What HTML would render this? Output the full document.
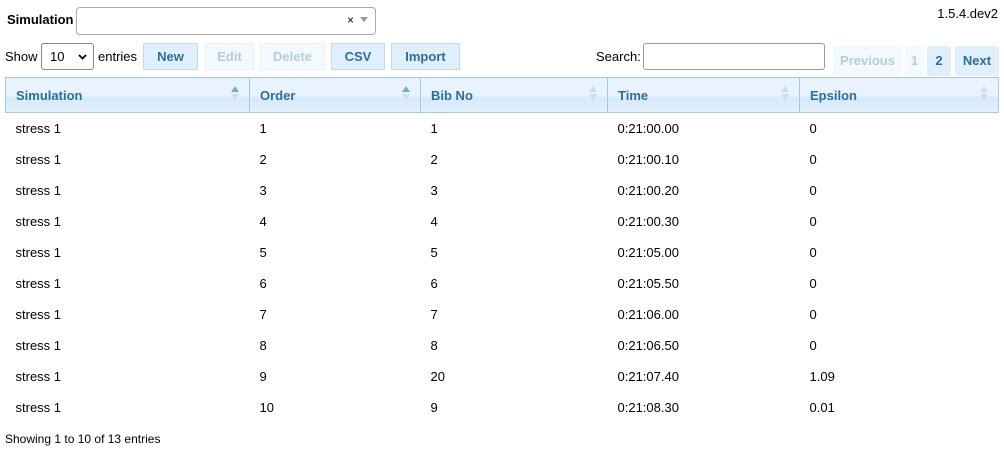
<!DOCTYPE html>
<html><head><style>
*{box-sizing:border-box}
body{margin:0;width:1004px;height:466px;font-family:"Liberation Sans",Arial,sans-serif;font-size:13px;color:#000;background:#fff;position:relative;overflow:hidden}
.a{position:absolute}
.btn{position:absolute;top:43px;height:27px;background:#dfeffc;border:1px solid #c5dbec;color:#2e6e9e;font-weight:bold;font-size:13px;text-align:center;line-height:25px}
.dis{opacity:.35}
.pg{position:absolute;top:46px;height:30px;background:#dfeffc;border-radius:3px;color:#2e6e9e;font-weight:bold;text-align:center;line-height:30px}
table{position:absolute;left:5px;top:77px;width:994px;border-collapse:collapse}
th{height:35px;border:1px solid #a6c9e2;background:linear-gradient(#e8f3fd,#e8f3fd 50%,#d6e9f9 58%,#e4f1fc);color:#2e6e9e;text-align:left;padding:0 10px;font-size:13px;position:relative}
th .s{position:absolute;right:10px;top:8px;width:8px}
th .s i{display:block;width:0;height:0;border-left:4px solid transparent;border-right:4px solid transparent}
th .s .u{border-bottom:6px solid #7aa7cf;margin-bottom:2px}
th .s .d{border-top:6px solid #c9def0}
th .s.n .u{border-bottom-color:#c9def0}
td{height:31px;padding:0 10px;font-size:13px}
</style></head><body>
<div class="a" style="left:7px;top:12px;font-weight:bold">Simulation</div>
<div class="a" style="left:76px;top:7px;width:300px;height:28px;border:1px solid #aaa;border-radius:4px"></div>
<div class="a" style="left:347px;top:13px;font-size:12px">×</div>
<div class="a" style="left:360px;top:17px;width:0;height:0;border-left:4px solid transparent;border-right:4px solid transparent;border-top:5px solid #999"></div>
<div class="a" style="right:6px;top:6px">1.5.4.dev2</div>
<div class="a" style="left:5px;top:49px">Show</div>
<div class="a" style="left:41px;top:43px;width:53px;height:27px;border:1px solid #888;border-radius:3px;padding:5px 0 0 8px">10<svg style="position:absolute;right:6px;top:10px" width="9" height="6" viewBox="0 0 9 6"><path d="M1 1L4.5 4.5L8 1" fill="none" stroke="#000" stroke-width="1.8"/></svg></div>
<div class="a" style="left:98px;top:49px">entries</div>
<div class="btn" style="left:143px;width:55px">New</div>
<div class="btn dis" style="left:205px;width:49px">Edit</div>
<div class="btn dis" style="left:260px;width:65px">Delete</div>
<div class="btn" style="left:331px;width:54px">CSV</div>
<div class="btn" style="left:391px;width:69px">Import</div>
<div class="a" style="left:596px;top:49px">Search:</div>
<div class="a" style="left:643px;top:43px;width:182px;height:27px;border:1px solid #999;border-radius:3px"></div>
<div class="pg dis" style="left:833px;width:69px">Previous</div>
<div class="pg dis" style="left:905px;width:19px">1</div>
<div class="pg" style="left:927px;width:24px">2</div>
<div class="pg" style="left:955px;width:44px">Next</div>
<table>
<tr><th style="width:244px">Simulation<span class="s"><i class="u"></i><i class="d"></i></span></th><th style="width:171px">Order<span class="s"><i class="u"></i><i class="d"></i></span></th><th style="width:187px">Bib No<span class="s n"><i class="u"></i><i class="d"></i></span></th><th style="width:192px">Time<span class="s n"><i class="u"></i><i class="d"></i></span></th><th>Epsilon<span class="s n"><i class="u"></i><i class="d"></i></span></th></tr>
<tr><td>stress 1</td><td>1</td><td>1</td><td>0:21:00.00</td><td>0</td></tr>
<tr><td>stress 1</td><td>2</td><td>2</td><td>0:21:00.10</td><td>0</td></tr>
<tr><td>stress 1</td><td>3</td><td>3</td><td>0:21:00.20</td><td>0</td></tr>
<tr><td>stress 1</td><td>4</td><td>4</td><td>0:21:00.30</td><td>0</td></tr>
<tr><td>stress 1</td><td>5</td><td>5</td><td>0:21:05.00</td><td>0</td></tr>
<tr><td>stress 1</td><td>6</td><td>6</td><td>0:21:05.50</td><td>0</td></tr>
<tr><td>stress 1</td><td>7</td><td>7</td><td>0:21:06.00</td><td>0</td></tr>
<tr><td>stress 1</td><td>8</td><td>8</td><td>0:21:06.50</td><td>0</td></tr>
<tr><td>stress 1</td><td>9</td><td>20</td><td>0:21:07.40</td><td>1.09</td></tr>
<tr><td>stress 1</td><td>10</td><td>9</td><td>0:21:08.30</td><td>0.01</td></tr>
</table>
<div class="a" style="left:5px;top:432px;font-size:12px">Showing 1 to 10 of 13 entries</div>
</body></html>
